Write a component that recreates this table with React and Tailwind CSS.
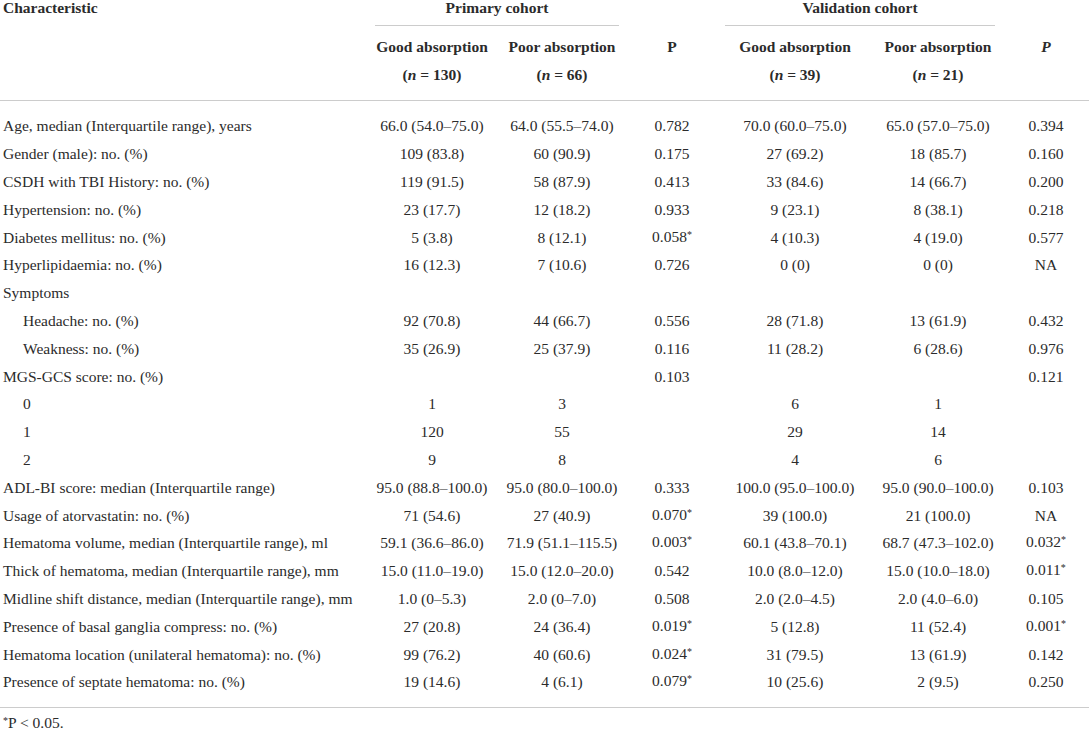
import React from "react";

const rows = [
  { label: "Age, median (Interquartile range), years", v: ["66.0 (54.0–75.0)", "64.0 (55.5–74.0)", "0.782", "70.0 (60.0–75.0)", "65.0 (57.0–75.0)", "0.394"] },
  { label: "Gender (male): no. (%)", v: ["109 (83.8)", "60 (90.9)", "0.175", "27 (69.2)", "18 (85.7)", "0.160"] },
  { label: "CSDH with TBI History: no. (%)", v: ["119 (91.5)", "58 (87.9)", "0.413", "33 (84.6)", "14 (66.7)", "0.200"] },
  { label: "Hypertension: no. (%)", v: ["23 (17.7)", "12 (18.2)", "0.933", "9 (23.1)", "8 (38.1)", "0.218"] },
  { label: "Diabetes mellitus: no. (%)", v: ["5 (3.8)", "8 (12.1)", "0.058*", "4 (10.3)", "4 (19.0)", "0.577"] },
  { label: "Hyperlipidaemia: no. (%)", v: ["16 (12.3)", "7 (10.6)", "0.726", "0 (0)", "0 (0)", "NA"] },
  { label: "Symptoms", v: ["", "", "", "", "", ""] },
  { label: "Headache: no. (%)", indent: true, v: ["92 (70.8)", "44 (66.7)", "0.556", "28 (71.8)", "13 (61.9)", "0.432"] },
  { label: "Weakness: no. (%)", indent: true, v: ["35 (26.9)", "25 (37.9)", "0.116", "11 (28.2)", "6 (28.6)", "0.976"] },
  { label: "MGS-GCS score: no. (%)", v: ["", "", "0.103", "", "", "0.121"] },
  { label: "0", indent: true, v: ["1", "3", "", "6", "1", ""] },
  { label: "1", indent: true, v: ["120", "55", "", "29", "14", ""] },
  { label: "2", indent: true, v: ["9", "8", "", "4", "6", ""] },
  { label: "ADL-BI score: median (Interquartile range)", v: ["95.0 (88.8–100.0)", "95.0 (80.0–100.0)", "0.333", "100.0 (95.0–100.0)", "95.0 (90.0–100.0)", "0.103"] },
  { label: "Usage of atorvastatin: no. (%)", v: ["71 (54.6)", "27 (40.9)", "0.070*", "39 (100.0)", "21 (100.0)", "NA"] },
  { label: "Hematoma volume, median (Interquartile range), ml", v: ["59.1 (36.6–86.0)", "71.9 (51.1–115.5)", "0.003*", "60.1 (43.8–70.1)", "68.7 (47.3–102.0)", "0.032*"] },
  { label: "Thick of hematoma, median (Interquartile range), mm", v: ["15.0 (11.0–19.0)", "15.0 (12.0–20.0)", "0.542", "10.0 (8.0–12.0)", "15.0 (10.0–18.0)", "0.011*"] },
  { label: "Midline shift distance, median (Interquartile range), mm", v: ["1.0 (0–5.3)", "2.0 (0–7.0)", "0.508", "2.0 (2.0–4.5)", "2.0 (4.0–6.0)", "0.105"] },
  { label: "Presence of basal ganglia compress: no. (%)", v: ["27 (20.8)", "24 (36.4)", "0.019*", "5 (12.8)", "11 (52.4)", "0.001*"] },
  { label: "Hematoma location (unilateral hematoma): no. (%)", v: ["99 (76.2)", "40 (60.6)", "0.024*", "31 (79.5)", "13 (61.9)", "0.142"] },
  { label: "Presence of septate hematoma: no. (%)", v: ["19 (14.6)", "4 (6.1)", "0.079*", "10 (25.6)", "2 (9.5)", "0.250"] },
];

const Val = ({ v }) => {
  if (v.endsWith("*")) {
    return (
      <>
        {v.slice(0, -1)}
        <span className="relative -top-[4px] text-[10px]">*</span>
      </>
    );
  }
  return v;
};

export default function App() {
  return (
    <div className="w-[1089px] h-[732px] overflow-hidden bg-white text-[#2b2b2b] font-['Liberation_Serif',serif] text-[15.5px]">
      <table className="w-[1089px] table-fixed">
        <colgroup>
          <col className="w-[367px]" />
          <col className="w-[130px]" />
          <col className="w-[130px]" />
          <col className="w-[90px]" />
          <col className="w-[156px]" />
          <col className="w-[130px]" />
          <col className="w-[86px]" />
        </colgroup>
        <thead>
          <tr>
            <th rowSpan={2} className="align-top text-left pl-[3px] font-bold border-b border-[#cccccc]">
              <div className="leading-[16px]">Characteristic</div>
            </th>
            <th colSpan={2} className="align-top font-bold">
              <div className="mx-2 h-[26px] leading-[16px] border-b border-[#cccccc]">Primary cohort</div>
            </th>
            <th></th>
            <th colSpan={2} className="align-top font-bold">
              <div className="mx-2 h-[26px] leading-[16px] border-b border-[#cccccc]">Validation cohort</div>
            </th>
            <th></th>
          </tr>
          <tr>
            <th className="pt-[7px] pb-[11px] leading-[28px] font-bold border-b border-[#cccccc]">
              Good absorption<br />(<i>n</i> = 130)
            </th>
            <th className="pt-[7px] pb-[11px] leading-[28px] font-bold border-b border-[#cccccc]">
              Poor absorption<br />(<i>n</i> = 66)
            </th>
            <th className="align-top pt-[7px] leading-[28px] font-bold border-b border-[#cccccc]">P</th>
            <th className="pt-[7px] pb-[11px] leading-[28px] font-bold border-b border-[#cccccc]">
              Good absorption<br />(<i>n</i> = 39)
            </th>
            <th className="pt-[7px] pb-[11px] leading-[28px] font-bold border-b border-[#cccccc]">
              Poor absorption<br />(<i>n</i> = 21)
            </th>
            <th className="align-top pt-[7px] leading-[28px] font-bold italic border-b border-[#cccccc]">P</th>
          </tr>
        </thead>
        <tbody>
          <tr><td colSpan={7} className="h-[12px]"></td></tr>
          {rows.map((r, i) => (
            <tr key={i} className="h-[27.8px]">
              <td className={r.indent ? "pl-[23px] leading-[18px] whitespace-nowrap" : "pl-[3px] leading-[18px] whitespace-nowrap"}>
                {r.label}
              </td>
              {r.v.map((c, j) => (
                <td key={j} className="text-center leading-[18px] whitespace-nowrap">
                  <Val v={c} />
                </td>
              ))}
            </tr>
          ))}
          <tr><td colSpan={7} className="h-[11px] border-b border-[#cccccc]"></td></tr>
        </tbody>
      </table>
      <div className="pl-[3px] pt-[6px] leading-[18px]">
        <span className="relative -top-[4px] text-[10px]">*</span>P &lt; 0.05.
      </div>
    </div>
  );
}
